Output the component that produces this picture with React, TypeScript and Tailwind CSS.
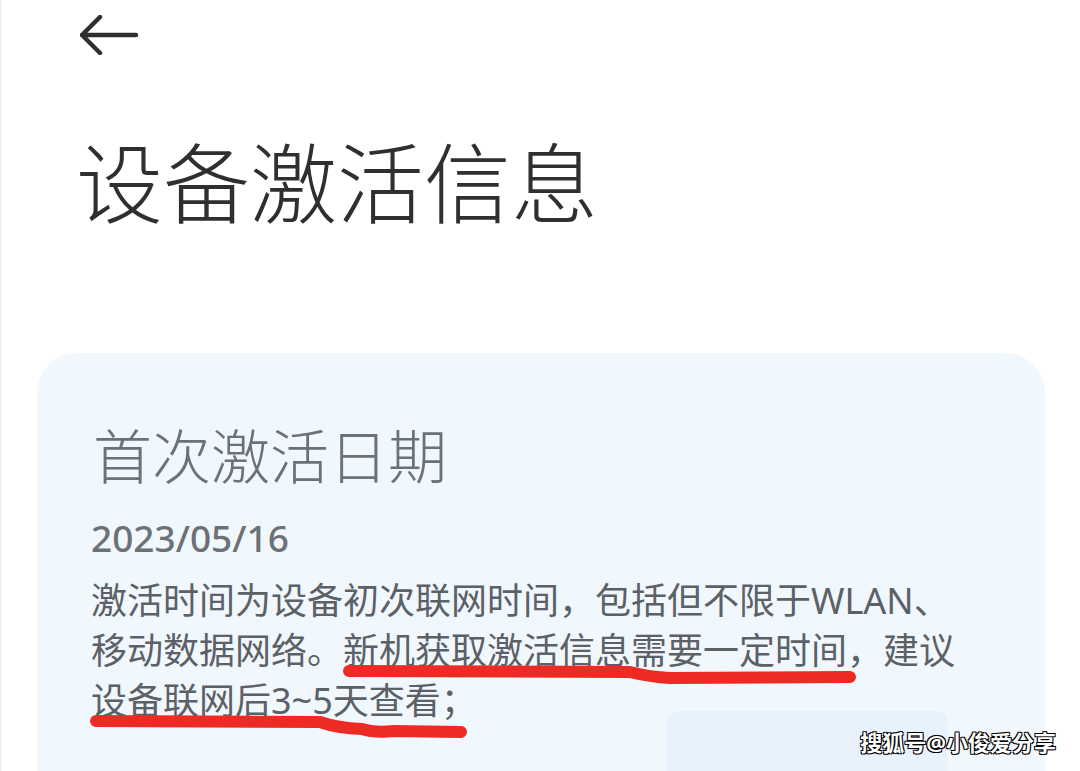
import React from "react";

const BackArrow = () => (
  <svg width="60" height="40" viewBox="0 0 60 40" fill="none">
    <path
      d="M20 2 L2 20 L20 38 M2 20 L56 20"
      stroke="#2f2f2f"
      strokeWidth={4.5}
      strokeLinecap="round"
      strokeLinejoin="round"
    />
  </svg>
);

// red pen marks drawn over the screenshot
const Marks = () => (
  <svg
    className="absolute inset-0 pointer-events-none"
    width="1080"
    height="771"
    viewBox="0 0 1080 771"
    fill="none"
  >
    <path
      d="M347 671 L628 672 Q648 677 668 678 L848 677"
      stroke="#ee2a24"
      strokeWidth={12}
      strokeLinecap="round"
      strokeLinejoin="round"
    />
    <path
      d="M94 721 L318 722 Q335 728 360 729 Q372 733 392 731 L459 732"
      stroke="#ee2a24"
      strokeWidth={12}
      strokeLinecap="round"
      strokeLinejoin="round"
    />
  </svg>
);

export default function App() {
  return (
    <div className="relative w-[1080px] h-[771px] overflow-hidden bg-white border-l-2 border-[#f1f1f1] font-['Noto_Sans','Noto_Sans_CJK_SC',sans-serif]">
      <div className="pt-[15px] pl-[78px]">
        <BackArrow />
      </div>

      <h1 className="mt-[85px] pl-[74px] text-[87px] leading-none font-light text-[#2f2f2f]">
        设备激活信息
      </h1>

      <div className="mx-[35px] mt-[126px] h-[520px] rounded-[40px] bg-[#f0f7fd] pt-[74px] pl-[56px]">
        <div className="text-[59px] leading-none font-light text-[#6c7175]">首次激活日期</div>
        <div className="mt-[30px] -ml-[2px] text-[37px] leading-[44px] font-medium text-[#6c7175]">2023/05/16</div>
        <div className="mt-[16px] -ml-[2px] text-[36px] leading-[50px] text-[#5b6166]">
          <div>激活时间为设备初次联网时间，包括但不限于WLAN、</div>
          <div>移动数据网络。新机获取激活信息需要一定时间，建议</div>
          <div>设备联网后3~5天查看；</div>
        </div>
        <div className="-mt-[15px] ml-[574px] w-[281px] h-[80px] rounded-[12px] bg-[#e8f2fd]" />
      </div>

      <Marks />

      <div className="absolute right-[24px] bottom-[12px] text-[22px] font-bold text-white [text-shadow:1px_1px_0_#000,-1px_-1px_0_#000,1px_-1px_0_#000,-1px_1px_0_#000]">
        搜狐号@小俊爱分享
      </div>
    </div>
  );
}
